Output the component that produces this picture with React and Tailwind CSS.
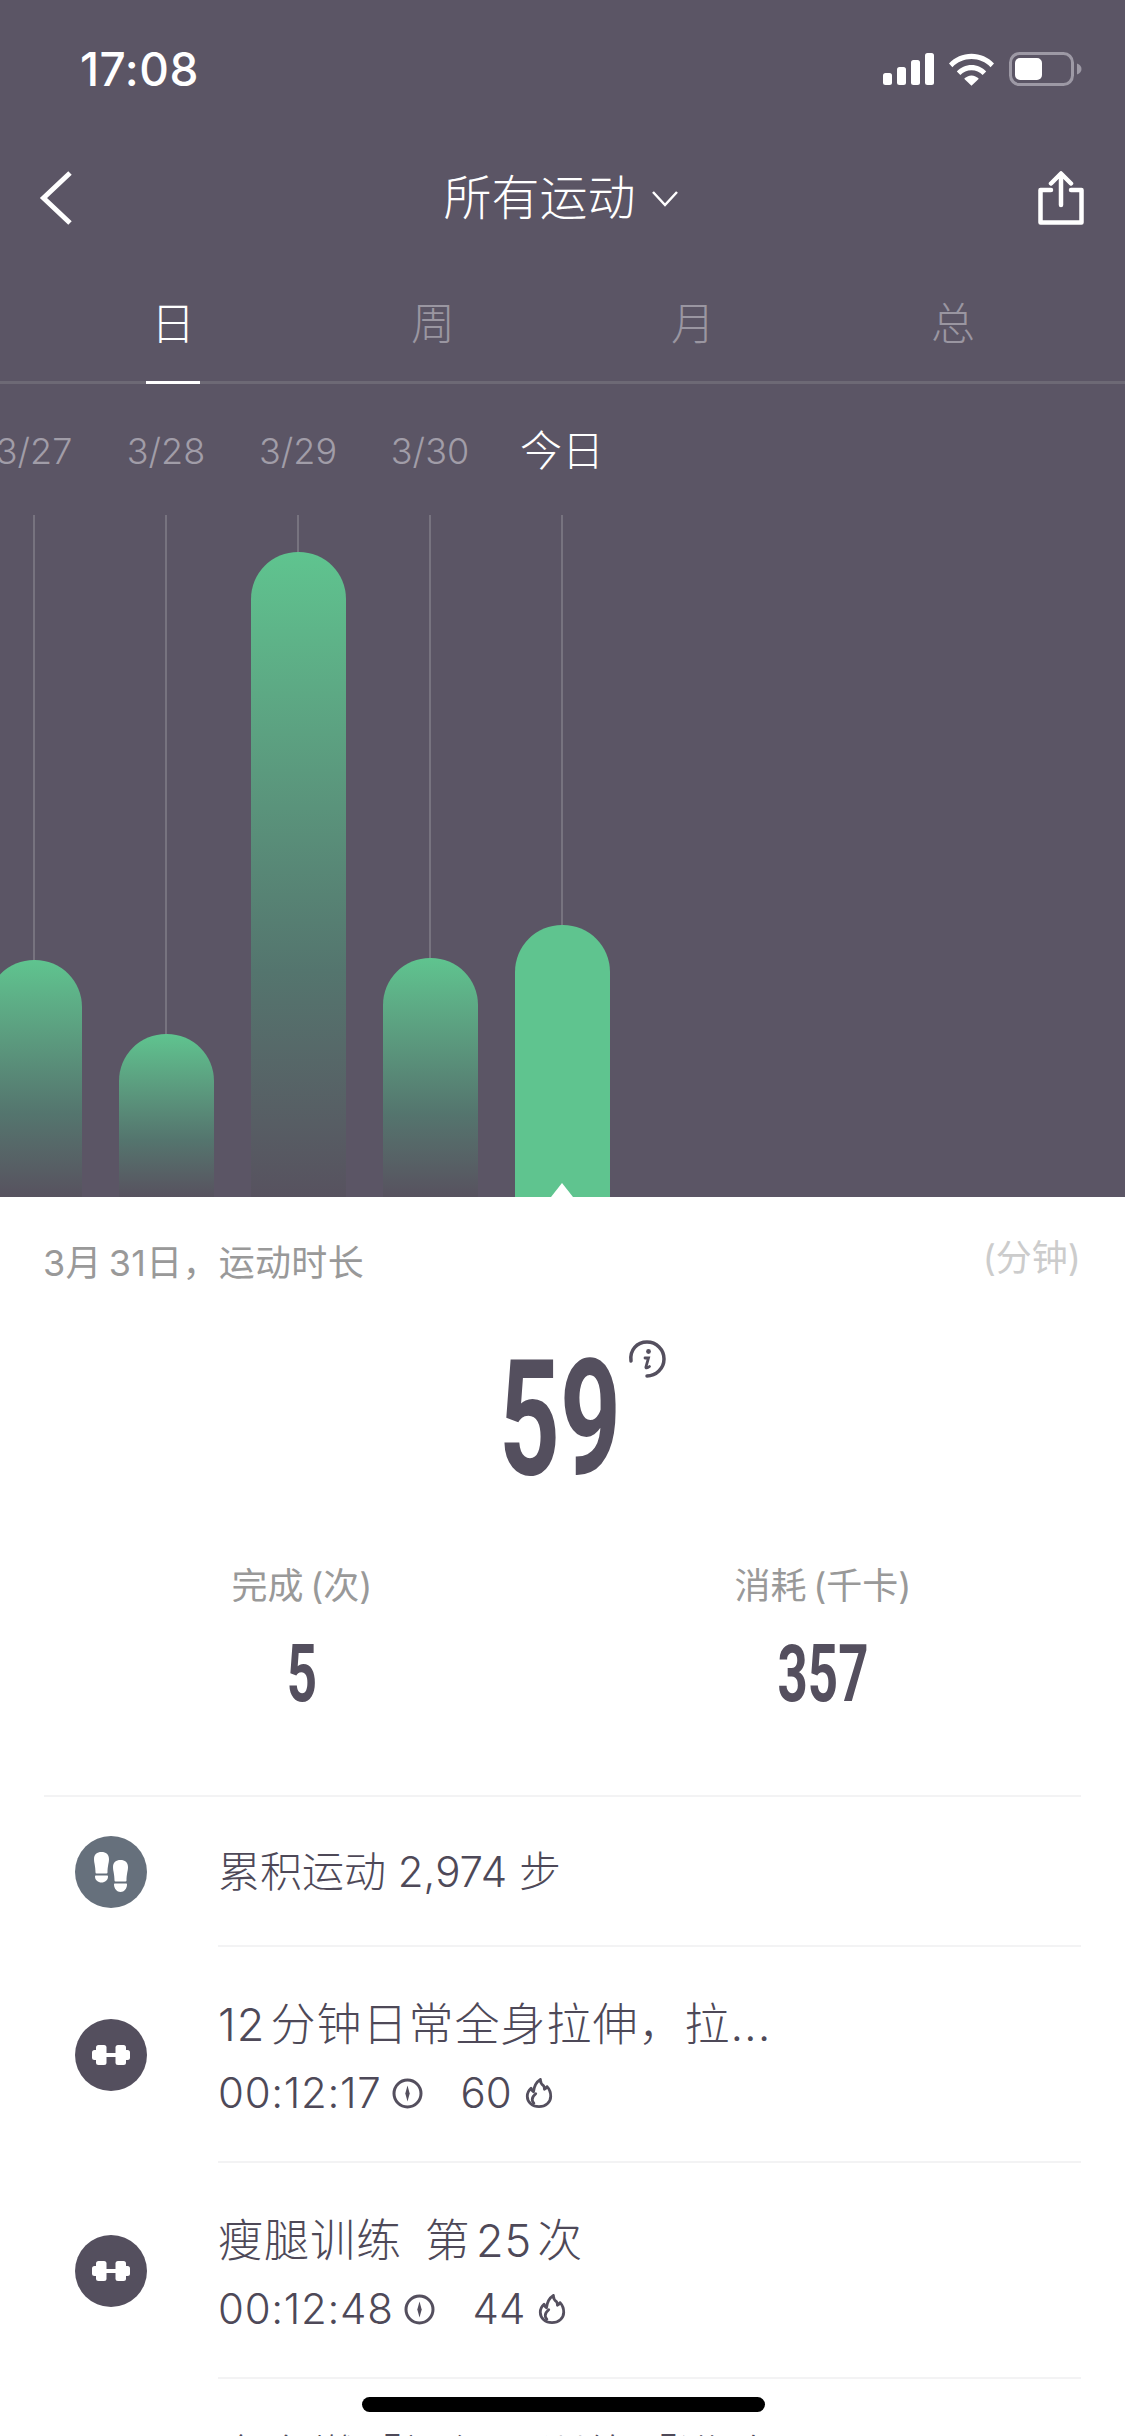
const sans = "font-['Inter','Noto_Sans_CJK_SC',sans-serif]";

const fade = "from-[#5fc48f] via-[#54756e] via-65% to-[#57525f]";
const bars = [
  { label: "3/27", top: 445, fill: fade },
  { label: "3/28", top: 519, fill: fade },
  { label: "3/29", top: 37, fill: fade },
  { label: "3/30", top: 443, fill: fade },
  { label: "今日", top: 410, fill: "from-[#5fc48f] to-[#5fc48f]", active: true },
];

const tabs = ["日", "周", "月", "总"];

function Signal() {
  return (
    <svg width="51" height="32" viewBox="0 0 51 32" fill="#fff">
      <rect x="0" y="20" width="9" height="12" rx="2.5" />
      <rect x="14" y="14" width="9" height="18" rx="2.5" />
      <rect x="28" y="7" width="9" height="25" rx="2.5" />
      <rect x="42" y="0" width="9" height="32" rx="2.5" />
    </svg>
  );
}

function Wifi() {
  return (
    <svg width="45" height="34" viewBox="0 0 46 34" fill="#fff">
      <path d="M0 11.5C6 5 14 1.500 23 1.500S40 5 46 11.500l-3.500 3.700C37.500 9.800 30.600 6.800 23 6.800S8.500 9.800 3.500 15.200z" />
      <path d="M8 19.500C11.800 15.500 17.200 13 23 13s11.200 2.500 15 6.500l-3.600 3.700C31.500 20.200 27.400 18.300 23 18.300s-8.500 1.900-11.400 4.900z" />
      <path d="M15.500 27c2-2 4.700-3.300 7.500-3.300s5.500 1.300 7.500 3.300L23 34z" />
    </svg>
  );
}

function Battery() {
  return (
    <svg width="73" height="34" viewBox="0 0 73 34">
      <rect x="1.500" y="1.500" width="62" height="31" rx="9" fill="none" stroke="#9d99a5" strokeWidth="3" />
      <rect x="6" y="6" width="27" height="22" rx="5" fill="#fff" />
      <path d="M68 11.500c3 1 4.500 3 4.500 5.500S71 21.500 68 22.500z" fill="#9d99a5" />
    </svg>
  );
}

function Back() {
  return (
    <svg width="34" height="54" viewBox="0 0 34 54" fill="none" stroke="#fff" strokeWidth="5">
      <path d="M31 2 4.500 27 31 52" />
    </svg>
  );
}

function Share() {
  return (
    <svg width="46" height="54" viewBox="0 0 46 54" fill="none" stroke="#fff" strokeWidth="4.500" strokeLinecap="round" strokeLinejoin="round">
      <path d="M13 19H2.500v32.500h41V19H33" />
      <path d="M23 34V3M13 12.500 23 2.500l10 10" />
    </svg>
  );
}

function InfoIcon() {
  return (
    <svg width="38" height="38" viewBox="0 0 38 38" fill="none" stroke="#544f5e" strokeWidth="3.500" strokeLinecap="round">
      <path d="M3 21C1.500 10 9 2 19 2c9.500 0 17 7.500 17 17 0 9.500-8 17-17 17" />
      <circle cx="20.500" cy="11.500" r="2.400" fill="#544f5e" stroke="none" />
      <path d="M17 18h3.500l-2.600 9c-.3 1.300 1.300 1.300 3.600-.5" strokeWidth="2.800" />
    </svg>
  );
}

function Steps() {
  return (
    <svg width="34" height="40" viewBox="0 0 34 40" fill="#fff">
      <path d="M0 7C0 2.500 3 0 7.500 0S15 2.500 15 7c0 4-1.500 7-1.500 13.500a1 1 0 0 1-1 1h-10a1 1 0 0 1-1-1C1.500 14 0 11 0 7z" />
      <path d="M2 23.500h11c.6 0 1 .4 1 1 0 3.500-3 6-6.500 6S1 28 1 24.500c0-.6.4-1 1-1z" />
      <path d="M19 15c0-4.500 3-7 7.500-7S34 10.500 34 15c0 4-1.500 7-1.500 13.500a1 1 0 0 1-1 1h-10a1 1 0 0 1-1-1C20.500 22 19 19 19 15z" />
      <path d="M21 31.500h11c.6 0 1 .4 1 1 0 4-3 7.500-6.500 7.500S20 36.500 20 32.500c0-.6.4-1 1-1z" />
    </svg>
  );
}

function Dumbbell() {
  return (
    <svg width="38" height="20" viewBox="0 0 38 20" fill="#fff">
      <rect x="0" y="5" width="8" height="10" rx="2.5" />
      <rect x="4" y="0" width="10.500" height="20" rx="2.5" />
      <rect x="12" y="8" width="14" height="4" />
      <rect x="23.500" y="0" width="10.500" height="20" rx="2.5" />
      <rect x="30" y="5" width="8" height="10" rx="2.5" />
    </svg>
  );
}

function Clock() {
  return (
    <svg width="31" height="31" viewBox="0 0 31 31" fill="none" stroke="#544f5e" strokeWidth="3">
      <circle cx="15.500" cy="15.500" r="13.500" />
      <path d="M15.500 7.500l2.200 8-2.200 8-2.200-8z" fill="#544f5e" stroke="none" />
    </svg>
  );
}

function Flame() {
  return (
    <svg width="28" height="30" viewBox="0 0 28 32" fill="none" stroke="#544f5e" strokeWidth="3" strokeLinejoin="round" strokeLinecap="round">
      <path d="M14 30.500C7 30.500 1.500 26 1.500 19.500c0-3.800 1.800-6.500 4-8.500.3 1.800 1.200 3 2.600 3.700C8.800 9 11.500 4 15.500 1.500c-.3 3.500 1.500 5.500 3.500 7 .7 1 .8 2.200.8 3.500 1.300-.5 2.300-1.500 2.800-2.800 2.200 2.300 3.900 6 3.900 10.300C26.500 26 21 30.500 14 30.500z" />
      <path d="M8.500 27c-1.200-1.300-1.700-2.800-1.700-4.200 0-2.500 1.700-4.300 3.700-6" />
    </svg>
  );
}

function SessionRow({ title, time, kcal }) {
  return (
    <div className="flex items-center">
      <div className="w-[218px] pl-[75px] shrink-0">
        <div className="w-[72px] h-[72px] rounded-full bg-[#544f5e] flex items-center justify-center">
          <Dumbbell />
        </div>
      </div>
      <div className="flex-1 h-[216px] border-b-2 border-[#f3f3f4] flex flex-col justify-center text-[#4e4958] pt-[10px] font-light">
        <div className="text-[45px] leading-[50px] tracking-[1px]">{title}</div>
        <div className="flex items-center text-[42px] leading-[50px] mt-[18px]">
          <span className="tracking-[0.7px]">{time}</span>
          <span className="ml-[10px]"><Clock /></span>
          <span className="ml-[38px]">{kcal}</span>
          <span className="ml-[13px]"><Flame /></span>
        </div>
      </div>
    </div>
  );
}

export default function App() {
  return (
    <div className={`w-[1125px] h-[2436px] relative overflow-hidden bg-white ${sans}`}>
      {/* dark top */}
      <div className="h-[1197px] bg-[#5b5565] flex flex-col overflow-hidden">
        <div className="h-[148px] pt-[47px] pl-[80px] pr-[43px] flex justify-between shrink-0">
          <span className="text-[46px] leading-[44px] font-medium text-white tracking-[0.5px]">17:08</span>
          <div className="flex items-center gap-[15px] h-[44px]">
            <Signal />
            <Wifi />
            <Battery />
          </div>
        </div>

        <div className="h-[100px] pl-[39px] pr-[41px] flex items-center justify-between shrink-0 relative">
          <Back />
          <div className="flex items-center text-white text-[48px] leading-[60px] font-light ml-[10px]">
            <span>所有运动</span>
            <svg className="ml-[16px] mt-[2px]" width="26" height="16" viewBox="0 0 26 16" fill="none" stroke="#fff" strokeWidth="2.500">
              <path d="M1 1l12 13L25 1" />
            </svg>
          </div>
          <Share />
        </div>

        <div className="h-[136px] border-b-[3px] border-[#6d6975] shrink-0 flex pl-[43px] pt-[51px]">
          {tabs.map((t, i) => (
            <div key={t} className="w-[260px] flex justify-center">
              <div className={`w-[54px] h-[85px] text-center text-[44px] leading-[50px] font-light ${i === 0 ? "text-white border-b-[3px] border-white" : "text-[#9a96a1]"}`}>
                {t}
              </div>
            </div>
          ))}
        </div>

        <div className="flex ml-[-32px] flex-1">
          {bars.map((b) => (
            <div key={b.label} className="w-[132px] shrink-0 flex flex-col items-center">
              <div className={`h-[131px] pt-[44px] text-center leading-[46px] ${b.active ? "text-white text-[42px] font-light" : "text-[#a19da8] text-[36px] font-light"}`}>
                {b.label}
              </div>
              <div className="flex-1 w-full flex flex-col items-center">
                <div className="w-[2px] bg-[#77737f]" style={{ height: b.top }} />
                <div className={`flex-1 w-[95px] rounded-t-[47px] bg-gradient-to-b ${b.fill} relative`}>
                  {b.active && (
                    <div className="absolute bottom-0 left-1/2 -translate-x-1/2 w-0 h-0 border-x-[11px] border-x-transparent border-b-[14px] border-b-white" />
                  )}
                </div>
              </div>
            </div>
          ))}
        </div>
      </div>

      {/* summary */}
      <div className="pl-[43px] pr-[44px] pt-[46px] flex justify-between items-start">
        <span className="text-[36px] leading-[40px] text-[#999999] tracking-[0.3px]">3月{"\u2009"}31日，运动时长</span>
        <span className="text-[36px] leading-[40px] text-[#cccccc] -mt-[5px]">(分钟)</span>
      </div>

      <div className="h-[149px] mt-[62px] flex justify-center items-center relative">
        <div className="relative mr-[6px]">
          <span className="block text-[162px] leading-[149px] font-bold font-['Roboto'] text-[#544f5e] scale-x-[0.656]">59</span>
          <span className="absolute left-[161px] top-[-5px]"><InfoIcon /></span>
        </div>
      </div>

      <div className="flex mt-[72px] text-center">
        <div className="w-[604px]">
          <div className="text-[36px] leading-[40px] text-[#999999]">完成{"\u2009"}(次)</div>
          <div className="text-[80px] leading-[70px] mt-[33px] font-bold font-['Roboto'] text-[#544f5e] scale-x-[0.66]">5</div>
        </div>
        <div className="w-[438px]">
          <div className="text-[36px] leading-[40px] text-[#999999]">消耗{"\u2009"}(千卡)</div>
          <div className="text-[80px] leading-[70px] mt-[33px] font-bold font-['Roboto'] text-[#544f5e] scale-x-[0.66]">357</div>
        </div>
      </div>

      <div className="mx-[44px] mt-[86px] h-[2px] bg-[#f3f3f4]" />

      {/* rows */}
      <div className="pr-[44px]">
        <div className="flex items-center">
          <div className="w-[218px] pl-[75px] shrink-0">
            <div className="w-[72px] h-[72px] rounded-full bg-[#66707c] flex items-center justify-center">
              <Steps />
            </div>
          </div>
          <div className="flex-1 h-[150px] border-b-2 border-[#f3f3f4] flex items-center text-[42px] text-[#4e4958] font-light">
            累积运动 2,974 步
          </div>
        </div>
        <SessionRow title={"12\u200a分钟日常全身拉伸，拉..."} time="00:12:17" kcal="60" />
        <SessionRow title={"瘦腿训练\u00a0\u2009第\u200a25\u200a次"} time="00:12:48" kcal="44" />
        <div className="pl-[218px] pt-[53px] text-[45px] leading-[50px] tracking-[1px] text-[#4e4958] font-light">全身燃「初级」训练「进阶」</div>
      </div>

      <div className="absolute left-[362px] top-[2397px] w-[403px] h-[15px] rounded-full bg-black" />
    </div>
  );
}
